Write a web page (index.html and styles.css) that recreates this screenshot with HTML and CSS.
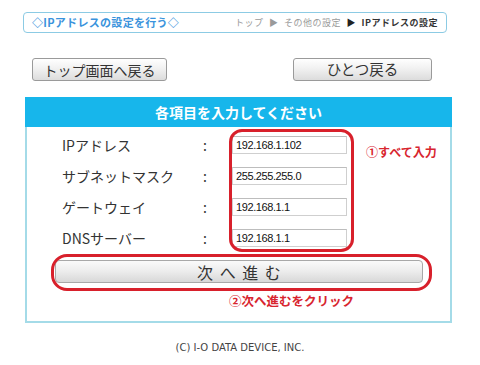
FILE: index.html
```html
<!DOCTYPE html>
<html lang="ja">
<head>
<meta charset="utf-8">
<title>IPアドレスの設定</title>
<link rel="stylesheet" href="styles.css">
</head>
<body>
<div class="page">
  <div class="titlebar">
    <span class="title">◇IPアドレスの設定を行う◇</span>
    <span class="crumbs">トップ ▶ その他の設定 <span class="crumb-arrow">▶</span> <b class="crumb-current">IPアドレスの設定</b></span>
  </div>

  <div class="navrow">
    <button class="btn btn-top">トップ画面へ戻る</button>
    <button class="btn btn-back">ひとつ戻る</button>
  </div>

  <div class="panel">
    <div class="panel-head">各項目を入力してください</div>
    <div class="panel-body">
      <div class="rows">
        <div class="label">IPアドレス</div><div class="colon">:</div><div class="field">192.168.1.102</div>
        <div class="label">サブネットマスク</div><div class="colon">:</div><div class="field">255.255.255.0</div>
        <div class="label">ゲートウェイ</div><div class="colon">:</div><div class="field">192.168.1.1</div>
        <div class="label">DNSサーバー</div><div class="colon">:</div><div class="field">192.168.1.1</div>
      </div>
      <button class="next">次 へ 進 む</button>
      <div class="note2">②次へ進むをクリック</div>

      <div class="ring ring-fields"></div>
      <div class="note1">①すべて入力</div>
      <div class="ring ring-next"></div>
    </div>
  </div>

  <div class="copy">(C) I-O DATA DEVICE, INC.</div>
</div>
</body>
</html>
```

FILE: styles.css
```css
html, body {
  margin: 0;
  padding: 0;
  background: #ffffff;
}
body {
  font-family: "Noto Sans CJK JP", "Noto Sans", sans-serif;
  color: #333;
}
.page {
  width: 480px;
  padding-top: 12px;
}
.titlebar {
  box-sizing: border-box;
  margin-left: 23px;
  width: 424px;
  height: 21px;
  border: 1px solid #8ccbe4;
  border-radius: 4px;
  display: flex;
  align-items: center;
  justify-content: space-between;
  padding: 0 8px 0 8px;
}
.title {
  color: #3a93dc;
  font-size: 11px;
  font-weight: bold;
  letter-spacing: 0.3px;
  line-height: 1;
}
.crumbs {
  color: #9a9a9a;
  font-size: 9px;
  letter-spacing: 0.5px;
  word-spacing: 3px;
  line-height: 1;
  white-space: nowrap;
}
.crumb-arrow {
  color: #222;
}
.crumb-current {
  color: #333;
  font-weight: bold;
}
.navrow {
  display: flex;
  justify-content: space-between;
  margin-top: 25px;
  padding: 0 48px 0 32px;
}
.btn {
  box-sizing: border-box;
  height: 23px;
  border: 1px solid #9a9a9a;
  border-radius: 3px;
  background: linear-gradient(#ffffff, #f1f1f1 45%, #dcdcdc);
  font-family: "Noto Sans CJK JP", sans-serif;
  font-size: 14px;
  color: #333;
  padding: 0;
  line-height: 1;
}
.btn-top { width: 135px; }
.btn-back { width: 139px; font-size: 14.5px; }
.panel {
  margin-top: 16px;
  margin-left: 25px;
  width: 427px;
  box-sizing: border-box;
  border: 2px solid #a4dbe8;
  border-top: none;
}
.panel-head {
  height: 30px;
  margin: 0 -2px;
  background: #17b6eb;
  color: #fff;
  font-size: 14px;
  font-weight: bold;
  display: flex;
  align-items: center;
  justify-content: center;
}
.panel-body {
  position: relative;
  padding: 2px 0 13px 0;
}
.rows {
  display: grid;
  grid-template-columns: 141px 29px 115px;
  grid-auto-rows: 31px;
  align-items: center;
  padding-left: 35px;
}
.label {
  font-size: 14px;
  color: #333;
  white-space: nowrap;
}
.colon {
  font-size: 14px;
  color: #333;
}
.field {
  box-sizing: border-box;
  height: 18px;
  border: 1px solid #cfcfcf;
  border-top-color: #bdbdbd;
  background: #fff;
  font-family: "Liberation Sans", sans-serif;
  font-size: 11px;
  letter-spacing: -0.4px;
  color: #111;
  padding: 2px 3px 0;
  line-height: 13px;
}
.next {
  display: block;
  box-sizing: border-box;
  margin: 7px 0 0 28px;
  width: 368px;
  height: 23px;
  border: 1px solid #a8a8a8;
  border-radius: 4px;
  background: linear-gradient(#fafafa, #ececec 50%, #d8d8d8);
  font-family: "Noto Sans CJK JP", sans-serif;
  font-size: 16px;
  word-spacing: 3px;
  color: #333;
  padding: 0;
  line-height: 1;
}
.note2 {
  margin-top: 10px;
  padding-left: 202px;
  color: #d8252f;
  font-size: 12.5px;
  font-weight: bold;
  line-height: 15px;
}
.note1 {
  position: absolute;
  left: 339px;
  top: 17px;
  color: #d8252f;
  font-size: 12px;
  font-weight: bold;
  line-height: 15px;
}
.ring {
  position: absolute;
  border: 3px solid #d8202b;
  box-sizing: border-box;
  pointer-events: none;
}
.ring-fields {
  left: 202px;
  top: 2px;
  width: 125px;
  height: 123px;
  border-radius: 13px;
}
.ring-next {
  left: 24px;
  top: 127px;
  width: 381px;
  height: 37px;
  border-radius: 16px;
}
.copy {
  margin-top: 18px;
  text-align: center;
  font-family: "DejaVu Sans", sans-serif;
  font-size: 10px;
  color: #444;
  line-height: 14px;
}
```
